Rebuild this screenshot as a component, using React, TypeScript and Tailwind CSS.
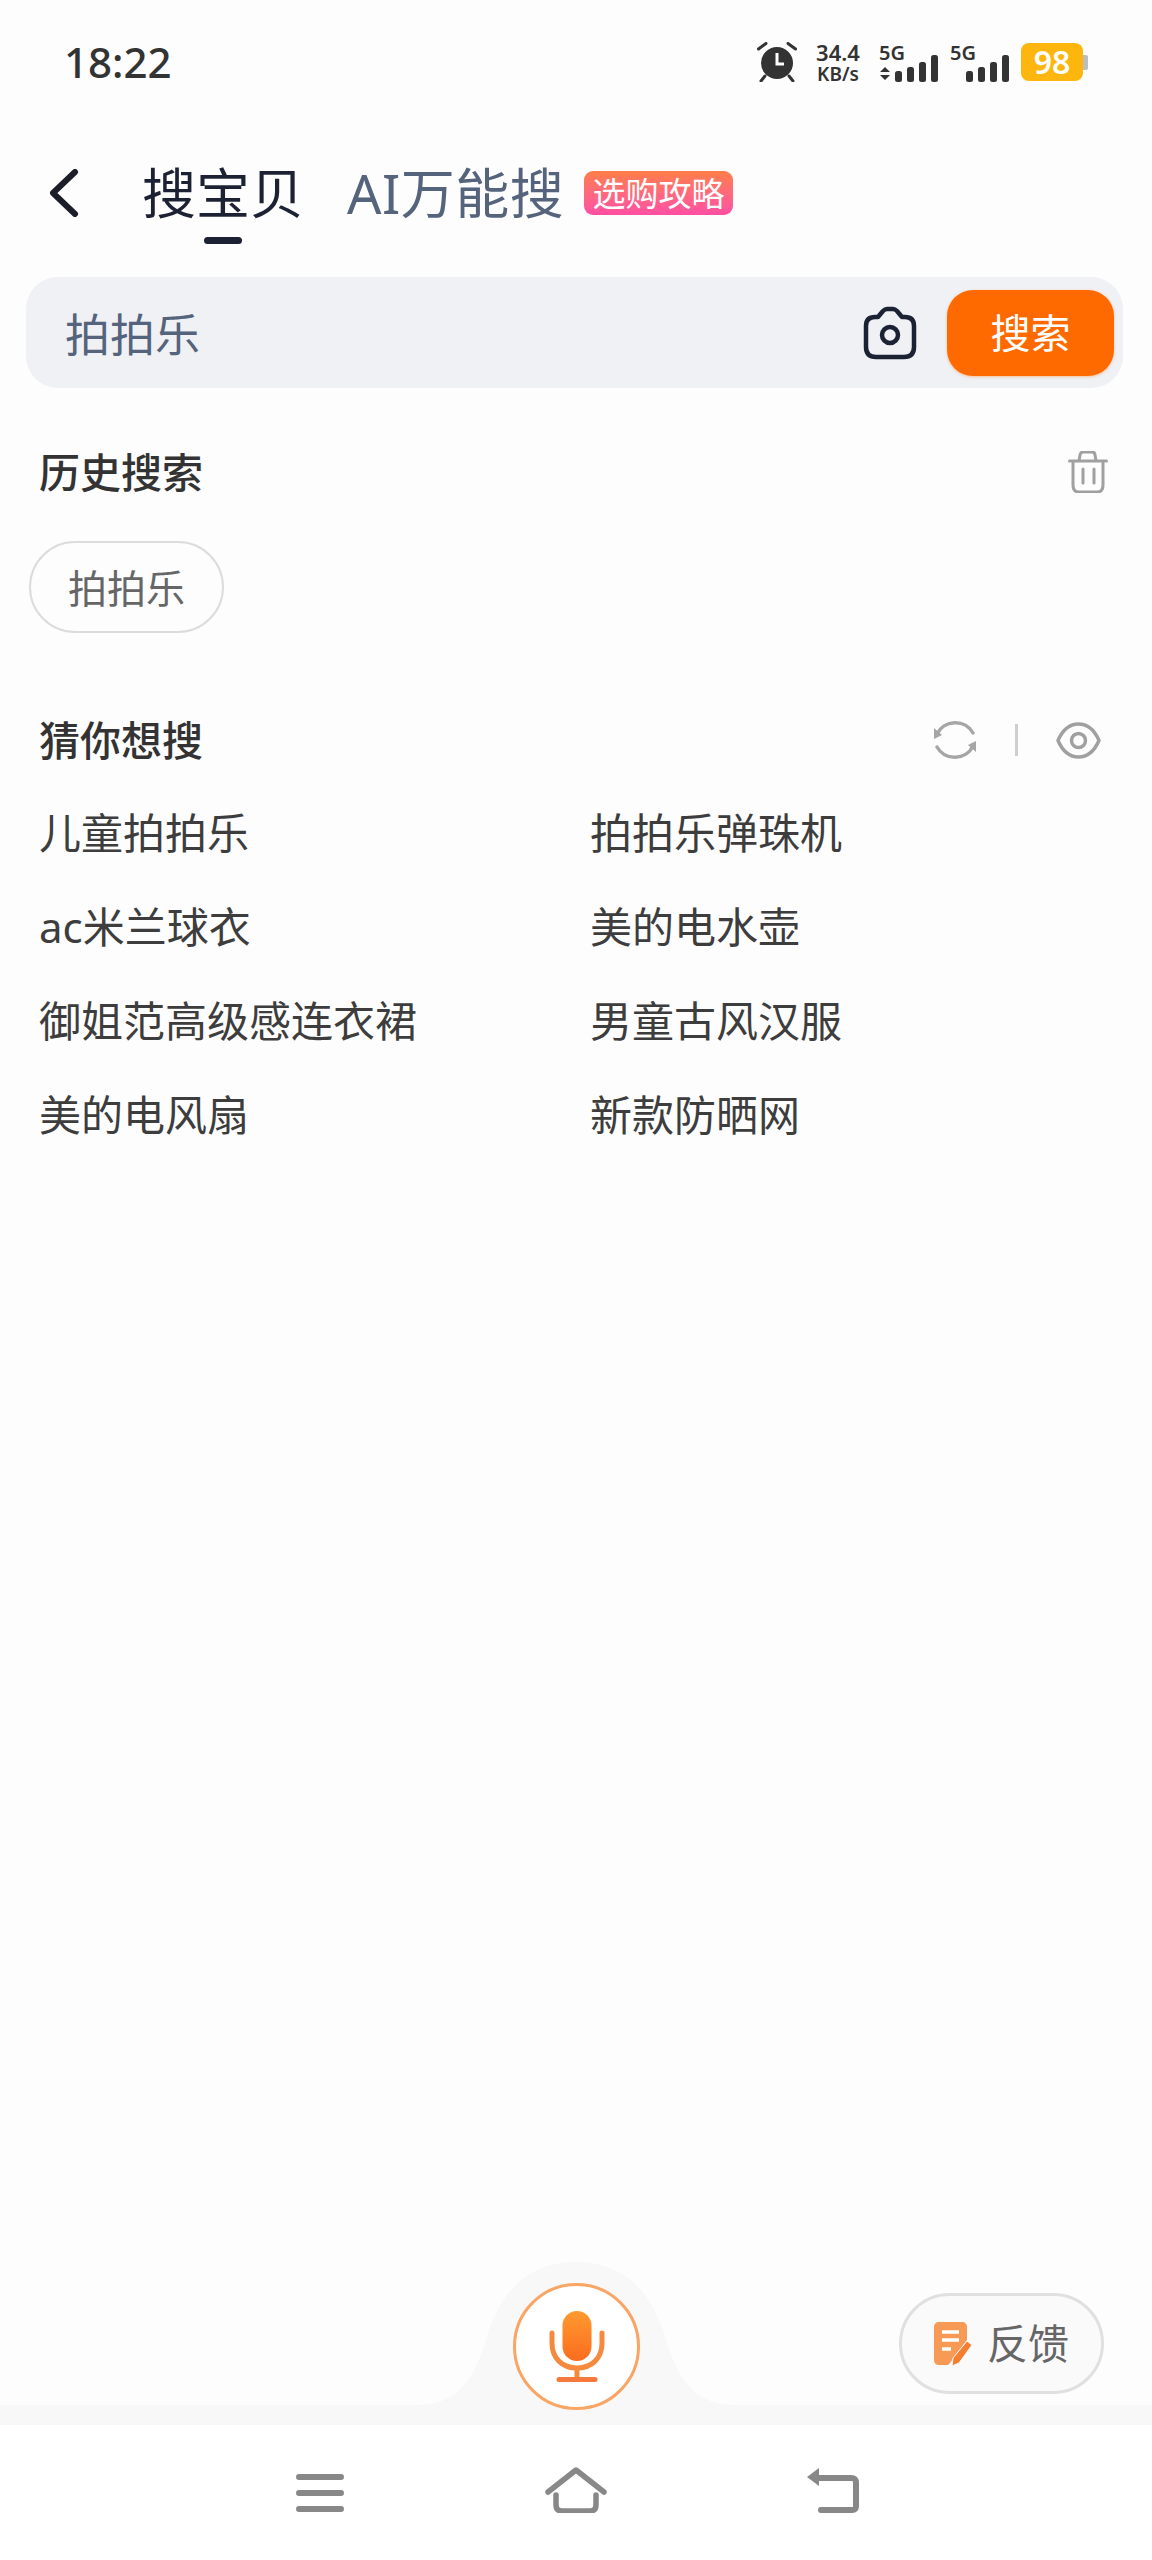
import React from "react";

const SUGGESTIONS = [
  "儿童拍拍乐",
  "拍拍乐弹珠机",
  "ac米兰球衣",
  "美的电水壶",
  "御姐范高级感连衣裙",
  "男童古风汉服",
  "美的电风扇",
  "新款防晒网",
];

function StatusBar() {
  return (
    <div className="flex h-[124px] items-center justify-between pl-[64px] pr-[69px]">
      <span className="text-[42px] font-medium leading-none text-[#333]">18:22</span>
      <div className="flex items-center text-[#333]">
        <svg viewBox="0 0 40 40" className="h-[40px] w-[40px]" fill="none">
          <circle cx="20" cy="21" r="16" fill="#333" />
          <path d="M20 11v11h7" stroke="#fff" strokeWidth="3" />
          <path d="M1.500 7L9 1.500M38.500 7L31 1.500M8 34l-4 5M32 34l4 5" stroke="#333" strokeWidth="3" strokeLinecap="round" />
        </svg>
        <div className="ml-[16px] flex w-[50px] flex-col items-center font-semibold">
          <span className="text-[22px] leading-[23px]">34.4</span>
          <span className="text-[19px] leading-[20px]">KB/s</span>
        </div>
        <Signal className="ml-[16px]" arrows />
        <Signal className="ml-[11px]" />
        <div className="relative ml-[11px] flex h-[38px] w-[62px] items-center justify-center rounded-[8px] bg-[#fdb60d] text-[32px] font-semibold leading-none text-white">
          98
          <div className="absolute right-[-5px] top-[12px] h-[15px] w-[5px] rounded-r-[2px] bg-[#bdbdbd]" />
        </div>
      </div>
    </div>
  );
}

function Signal({ className, arrows }: { className?: string; arrows?: boolean }) {
  return (
    <div className={`relative h-[39px] w-[60px] ${className ?? ""}`}>
      <span className="absolute left-0 top-0 text-[20px] font-semibold leading-[19px]">5G</span>
      <svg viewBox="0 0 60 39" className="h-[39px] w-[60px]">
        {arrows && <path d="M1 29l5-5 5 5zM1 32l5 5 5-5z" fill="#333" />}
        <rect x="16" y="28" width="7" height="11" rx="2.500" fill="#333" />
        <rect x="28" y="24" width="7" height="15" rx="2.500" fill="#333" />
        <rect x="40" y="19" width="7" height="20" rx="2.500" fill="#333" />
        <rect x="52" y="12" width="7" height="27" rx="2.500" fill="#333" />
      </svg>
    </div>
  );
}

function Tabs() {
  return (
    <div className="mt-[19px] flex h-[94px] items-center pl-[49px] pt-[6px]">
      <svg viewBox="0 0 30 48" className="h-[48px] w-[30px]" fill="none" stroke="#1b1e28" strokeWidth="6" strokeLinecap="round" strokeLinejoin="round">
        <path d="M26 3L4 24l22 21" />
      </svg>
      <div className="relative ml-[63px]">
        <span className="text-[54px] leading-none text-[#1c2233]">搜宝贝</span>
        <div className="absolute left-[62px] top-[71px] h-[7px] w-[38px] rounded-full bg-[#1c2233]" />
      </div>
      <span className="ml-[43px] w-[216px] whitespace-nowrap text-[54px] leading-none tracking-[0.5px] text-[#55637c]">AI万能搜</span>
      <span className="ml-[21px] flex h-[44px] w-[149px] items-center justify-center rounded-[9px] bg-gradient-to-b from-[#ff7d45] to-[#ff4fa3] text-[33px] leading-none text-white">
        选购攻略
      </span>
    </div>
  );
}

function SearchBar() {
  return (
    <div className="ml-[26px] mt-[40px] flex h-[111px] w-[1097px] items-center rounded-[32px] bg-[#eff1f4] pl-[39px] pr-[9px]">
      <span className="flex-1 pt-[4px] text-[45px] leading-none text-[#55637c]">拍拍乐</span>
      <svg viewBox="0 0 54 54" className="h-[54px] w-[54px]" fill="none" stroke="#1b2233" strokeWidth="4.500">
        <path
          d="M3 20c0-6 3-9 9-9h3l5-6c1-1 2-2 4-2h6c2 0 3 1 4 2l5 6h3c6 0 9 3 9 9v21c0 7-4 10-10 10H13C7 51 3 48 3 41z"
          strokeLinejoin="round"
        />
        <circle cx="27" cy="29" r="8" />
      </svg>
      <div className="ml-[30px] flex h-[86px] w-[167px] items-center justify-center rounded-[26px] bg-[#ff6a00] text-[40px] leading-none text-white shadow-[0_1px_3px_rgba(255,106,0,0.35)]">
        搜索
      </div>
    </div>
  );
}

function History() {
  return (
    <section>
      <div className="mt-[54px] flex h-[60px] items-center justify-between pl-[39px] pr-[44px]">
        <h2 className="text-[41px] font-medium leading-none text-[#333]">历史搜索</h2>
        <svg viewBox="0 0 40 42" className="h-[42px] w-[40px]" fill="none" stroke="#a0a0a0" strokeWidth="3" strokeLinecap="round">
          <path d="M1.500 10h37M11 10l1-6c.4-2 1.500-3 3-3h9c2 0 3 1 3 3l1 6" />
          <path d="M5 12v22c0 5 2 7 6 7h18c4 0 6-2 6-7V12M15 18v14M26 18v14" />
        </svg>
      </div>
      <div className="ml-[29px] mt-[39px] flex h-[92px] w-[195px] items-center justify-center rounded-full border-2 border-[#dcdcdc] text-[39px] leading-none text-[#666]">
        拍拍乐
      </div>
    </section>
  );
}

function Guess() {
  return (
    <section>
      <div className="mt-[77px] flex h-[60px] items-center pl-[39px] pr-[51px]">
        <h2 className="flex-1 text-[41px] font-medium leading-none text-[#333]">猜你想搜</h2>
        <svg viewBox="0 0 42 42" className="h-[42px] w-[42px]" fill="none" stroke="#a6a6a6" strokeWidth="3.500">
          <path d="M3 15A20 19 0 0 1 39 14" strokeLinecap="round" />
          <path d="M3 28A20 19 0 0 0 39 27" strokeLinecap="round" />
          <path d="M0 9v11l8-4zM42 33V22l-8 4z" fill="#a6a6a6" stroke="none" />
        </svg>
        <div className="ml-[39px] h-[32px] w-[3px] bg-[#cfcfcf]" />
        <svg viewBox="0 0 45 37" className="ml-[38px] h-[37px] w-[45px]" fill="none" stroke="#a0a0a0" strokeWidth="3.500">
          <path d="M2 18.500C7 7 14 2 22.500 2S38 7 43 18.500C38 30 31 35 22.500 35S7 30 2 18.500z" strokeLinejoin="round" />
          <circle cx="22.500" cy="18.500" r="7" />
        </svg>
      </div>
      <div className="mt-[16px] grid grid-cols-[551px_1fr] pl-[39px]">
        {SUGGESTIONS.map((s) => (
          <div key={s} className="flex h-[94px] items-center text-[42px] leading-none text-[#3d3d3d]">
            {s}
          </div>
        ))}
      </div>
    </section>
  );
}

function MicDock() {
  return (
    <div className="relative h-[163px]">
      {/* hump behind the mic */}
      <svg viewBox="0 0 1152 163" className="absolute inset-0 h-[163px] w-[1152px]">
        <path
          d="M0 143H416c36 0 56-18 70-66C502 22 535 0 576 0s74 22 90 77c14 48 34 66 70 66H1152v20H0z"
          fill="#f8f8f8"
        />
      </svg>
      <div className="absolute left-[513px] top-[21px] flex h-[127px] w-[127px] items-center justify-center rounded-full border-[3px] border-[#f9a565] bg-white">
        <svg viewBox="0 0 56 71" className="h-[71px] w-[56px]" fill="none">
          <defs>
            <linearGradient id="mic" x1="0" y1="0" x2="0" y2="1">
              <stop offset="0" stopColor="#ff9a30" />
              <stop offset="1" stopColor="#fb6c1e" />
            </linearGradient>
          </defs>
          <rect x="13.500" y="0" width="29" height="50" rx="14.500" fill="url(#mic)" />
          <path d="M3 22v10c0 15 10 25 25 25s25-10 25-25V22" stroke="#f58a3e" strokeWidth="5" strokeLinecap="round" />
          <path d="M28 57v11" stroke="#f58a3e" strokeWidth="5" />
          <path d="M10 68.500h36" stroke="#f5793a" strokeWidth="5" strokeLinecap="round" />
        </svg>
      </div>
      <div className="absolute left-[899px] top-[31px] flex h-[101px] w-[205px] items-center justify-center rounded-full border-[3px] border-[#e0e0e0] bg-[#fafafa]">
        <svg viewBox="0 0 38 44" className="h-[44px] w-[38px]">
          <path d="M5 0h23c3 0 5 2 5 5v13L16 41l-2 2H5c-3 0-5-2-5-5V5c0-3 2-5 5-5z" fill="#f79a56" />
          <path d="M8 10h17M8 18h17M8 27h9" stroke="#fff" strokeWidth="3.500" />
          <path d="M33 19l5 4-13 18-7 3 1-8z" fill="#f47f33" stroke="#fafafa" strokeWidth="1" />
        </svg>
        <span className="ml-[15px] text-[41px] leading-none text-[#666]">反馈</span>
      </div>
    </div>
  );
}

function NavBar() {
  return (
    <div className="flex h-[135px] items-center justify-center bg-white pb-[6px] pl-[2px]">
      <svg viewBox="0 0 48 38" className="mt-[6px] h-[38px] w-[48px]" fill="none" stroke="#888" strokeWidth="6" strokeLinecap="round">
        <path d="M3 3h42M3 19h42M3 35h42" />
      </svg>
      <svg viewBox="0 0 62 46" className="ml-[201px] h-[46px] w-[62px]" fill="none" stroke="#888" strokeWidth="5.500" strokeLinecap="round" strokeLinejoin="round">
        <path d="M3 25L31 3l28 22" />
        <path d="M11 28v10c0 4 2 6 6 6h28c4 0 6-2 6-6V28" />
      </svg>
      <svg viewBox="0 0 52 46" className="ml-[200px] h-[46px] w-[52px]" fill="none" stroke="#888" strokeWidth="6" strokeLinecap="round" strokeLinejoin="round">
        <path d="M8 11h36c4 0 5 2 5 5v23c0 3-1 4-4 4H14" />
        <path d="M0 10L12 1v18z" fill="#888" stroke="none" />
      </svg>
    </div>
  );
}

export default function App() {
  return (
    <div className="flex h-[2560px] w-[1152px] flex-col bg-[#fdfdfd] font-['Noto_Sans','Noto_Sans_CJK_SC',sans-serif]">
      <StatusBar />
      <Tabs />
      <SearchBar />
      <History />
      <Guess />
      <div className="flex-1" />
      <MicDock />
      <NavBar />
    </div>
  );
}
